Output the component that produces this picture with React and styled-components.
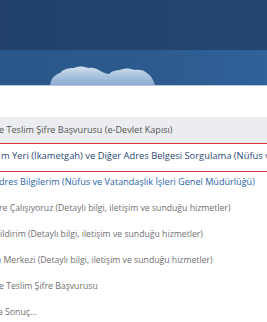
import React from "react";
import styled, { createGlobalStyle } from "styled-components";

const GlobalStyle = createGlobalStyle`
  html, body { margin: 0; padding: 0; background: #ffffff; overflow: hidden; }
  body { font-family: "Open Sans", "Noto Sans", sans-serif; }
`;

const Page = styled.div`
  width: 267px;
  height: 322px;
  overflow: hidden;
  display: flex;
  flex-direction: column;
  & > * { flex-shrink: 0; }
`;

const TopBar = styled.div`
  height: 50px;
  background: linear-gradient(90deg, #21416a 0%, #244670 100%);
`;

const Banner = styled.div`
  height: 35px;
  display: flex;
  align-items: flex-end;
  padding-left: 50px;
  background: linear-gradient(90deg, #2a5789 0%, #2d5b8f 60%, #30619a 100%);
  border-bottom: 1px solid #b9c7d8;
`;

const Cloud = () => (
  <svg width="110" height="19" viewBox="0 0 110 19">
    <defs>
      <linearGradient id="cg" x1="0" y1="0" x2="0" y2="1">
        <stop offset="0" stopColor="#d2e0ee" />
        <stop offset="0.5" stopColor="#aac3df" />
        <stop offset="1" stopColor="#8caccf" />
      </linearGradient>
    </defs>
    <path
      d="M0 19 C1 13 4 9 10 7 C13 3 19 2 24 2 C28 0 34 0 38 2 C43 1 48 3 52 6 C55 7 57 8 59 8 C62 5 66 4 70 4 C74 2 80 2 84 4 C89 3 95 4 98 8 C101 10 103 13 105 19 Z"
      fill="url(#cg)"
    />
  </svg>
);

const List = styled.ul`
  list-style: none;
  margin: 31px 0 0 0;
  padding: 0;
  display: flex;
  flex-direction: column;
  & > * { flex-shrink: 0; }
`;

const Item = styled.li`
  font-size: ${(p) => p.$size || 8.7}px;
  line-height: 12px;
  white-space: nowrap;
  color: ${(p) => p.$color || "#6f6f6f"};
  background: ${(p) => (p.$shaded ? "#ebedf0" : "transparent")};
  padding: ${(p) => (p.$boxed ? "6px 0 9px" : "7px 0")};
  margin: ${(p) => (p.$boxed ? "0 -20px -3px" : "0")};
  border: ${(p) => (p.$boxed ? "1px solid #e0343a" : "none")};
`;

const Label = styled.span`
  display: inline-block;
  margin-left: ${(p) => p.$shift}px;
`;

const rows = [
  { text: "e Teslim Şifre Başvurusu (e-Devlet Kapısı)", shift: -1, color: "#545454", shaded: true, size: 9.1 },
  { text: "m Yeri (İkametgah) ve Diğer Adres Belgesi Sorgulama (Nüfus ve Vatandaşlık İşleri Genel Müdürlüğü)", shift: 20, color: "#2b4a75", boxed: true, size: 9.4 },
  { text: "dres Bilgilerim (Nüfus ve Vatandaşlık İşleri Genel Müdürlüğü)", shift: -1, color: "#2a64a8", size: 9.1 },
  { text: "re Çalışıyoruz (Detaylı bilgi, iletişim ve sunduğu hizmetler)", shift: -1 },
  { text: "ildirim (Detaylı bilgi, iletişim ve sunduğu hizmetler)", shift: 0 },
  { text: "ı Merkezi (Detaylı bilgi, iletişim ve sunduğu hizmetler)", shift: -1 },
  { text: "e Teslim Şifre Başvurusu", shift: -1 },
  { text: "a Sonuç...", shift: -2 },
];

export default function App() {
  return (
    <>
      <GlobalStyle />
      <Page>
        <TopBar />
        <Banner>
          <Cloud />
        </Banner>
        <List>
          {rows.map((r, i) => (
            <Item key={i} $color={r.color} $shaded={r.shaded} $boxed={r.boxed} $size={r.size}>
              <Label $shift={r.shift}>{r.text}</Label>
            </Item>
          ))}
        </List>
      </Page>
    </>
  );
}
